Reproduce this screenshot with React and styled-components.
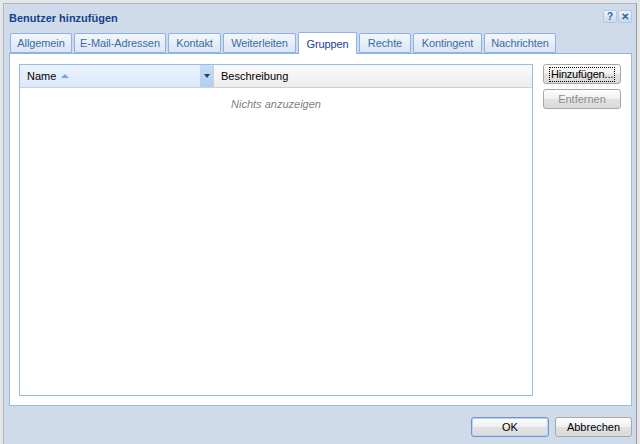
import React from "react";
import styled, { createGlobalStyle } from "styled-components";

const GlobalStyle = createGlobalStyle`
  html, body {
    margin: 0;
    padding: 0;
    background: #e6e6e6;
    overflow: hidden;
  }
  body {
    font-family: "Liberation Sans", Arial, sans-serif;
    font-size: 11px;
  }
`;

const Window = styled.div`
  margin: 3px 3px 0 3px;
  height: 446px;
  box-sizing: border-box;
  background: #cfdbea;
  border: 1px solid #a9b7c8;
  border-right-color: #9a9a9a;
  display: flex;
  flex-direction: column;
  padding: 0 4px 0 5px;
`;

const Header = styled.div`
  display: flex;
  align-items: center;
  justify-content: space-between;
  height: 27px;
`;

const Title = styled.div`
  font-weight: bold;
  font-size: 11px;
  color: #15428b;
  padding-top: 1px;
`;

const Tools = styled.div`
  display: flex;
  gap: 1px;
  margin-top: -2px;
`;

const Tool = styled.div`
  width: 14px;
  height: 13px;
  border-radius: 2px;
  background: linear-gradient(#eef3fa, #c9d8ec);
  border: 1px solid #b5c8e2;
  box-sizing: border-box;
  display: flex;
  align-items: center;
  justify-content: center;
  color: #2d5fa8;
  font-weight: bold;
  font-size: 10px;
  line-height: 1;
`;

const Panel = styled.div`
  display: flex;
  flex-direction: column;
  margin-top: 1px;
  width: 623px;
`;

const TabStrip = styled.div`
  display: flex;
  gap: 2px;
  padding-left: 1px;
  height: 21px;
  border-bottom: 1px solid #8db2e3;
  align-items: flex-end;
`;

const Tab = styled.div`
  width: ${(p) => p.$w}px;
  height: ${(p) => (p.$active ? "22px" : "20px")};
  margin-bottom: ${(p) => (p.$active ? "-1px" : "0")};
  box-sizing: border-box;
  display: flex;
  align-items: center;
  justify-content: center;
  border: 1px solid #8db2e3;
  border-bottom: ${(p) => (p.$active ? "none" : "1px solid #8db2e3")};
  border-radius: 2px 2px 0 0;
  background: ${(p) =>
    p.$active ? "#ffffff" : "linear-gradient(#f3f7fc, #d9e5f4)"};
  color: ${(p) => (p.$active ? "#15428b" : "#416aa3")};
  white-space: nowrap;
  letter-spacing: -0.1px;
`;

const Body = styled.div`
  height: 352px;
  box-sizing: border-box;
  background: #ffffff;
  border: 1px solid #99bbe8;
  border-top: none;
  display: flex;
  padding: 10px 10px 9px 9px;
  gap: 10px;
`;

const Grid = styled.div`
  width: 514px;
  box-sizing: border-box;
  border: 1px solid #99bbe8;
  display: flex;
  flex-direction: column;
`;

const HeaderRow = styled.div`
  display: flex;
  height: 22px;
  border-bottom: 1px solid #d0d0d0;
  background: linear-gradient(#fbfbfb, #ececec);
`;

const ColHeader = styled.div`
  width: ${(p) => p.$w || "auto"};
  flex: ${(p) => (p.$w ? "none" : "1")};
  display: flex;
  align-items: center;
  box-sizing: border-box;
  padding-left: 7px;
  color: #000;
  position: relative;
  background: ${(p) =>
    p.$hover ? "linear-gradient(#ebf3fd, #d9e8fb)" : "transparent"};
  border-right: 1px solid ${(p) => (p.$hover ? "#d0d0d0" : "transparent")};
`;

const SortArrow = styled.span`
  margin-left: 5px;
  width: 0;
  height: 0;
  border-left: 4px solid transparent;
  border-right: 4px solid transparent;
  border-bottom: 4px solid #7ba3d6;
`;

const Trigger = styled.div`
  position: absolute;
  right: 0;
  top: 0;
  bottom: 0;
  width: 13px;
  background: linear-gradient(#c8ddf6, #b1cdf0);
  display: flex;
  align-items: center;
  justify-content: center;
  &::after {
    content: "";
    border-left: 3px solid transparent;
    border-right: 3px solid transparent;
    border-top: 4px solid #2c3e57;
  }
`;

const Empty = styled.div`
  text-align: center;
  color: #808080;
  font-style: italic;
  padding-top: 10px;
`;

const SideButtons = styled.div`
  display: flex;
  flex-direction: column;
  gap: 5px;
`;

const Button = styled.button`
  width: ${(p) => p.$w || 78}px;
  height: 20px;
  box-sizing: border-box;
  font-family: "Liberation Sans", Arial, sans-serif;
  font-size: 11px;
  color: ${(p) => (p.disabled ? "#8d8d8d" : "#000")};
  border: 1px solid ${(p) => (p.$default ? "#6e96c4" : "#a7a7a7")};
  box-shadow: ${(p) => (p.$default ? "inset 0 0 0 1px #bcd3ee" : "none")};
  border-radius: 3px;
  background: linear-gradient(#fdfdfd 0%, #f0f0f0 50%, #e2e2e2 51%, #dadada 100%);
  padding: 0;
  display: flex;
  align-items: center;
  justify-content: center;
`;

const Focus = styled.span`
  outline: 1px dotted #000;
  padding: 0 1px;
  line-height: 13px;
  letter-spacing: -0.2px;
`;

const Footer = styled.div`
  display: flex;
  justify-content: flex-end;
  gap: 6px;
  padding-top: 11px;
  width: 623px;
`;

const tabs = [
  ["Allgemein", 62],
  ["E-Mail-Adressen", 92],
  ["Kontakt", 53],
  ["Weiterleiten", 73],
  ["Gruppen", 59],
  ["Rechte", 52],
  ["Kontingent", 69],
  ["Nachrichten", 72],
];

export default function App() {
  return (
    <>
      <GlobalStyle />
      <Window>
        <Header>
          <Title>Benutzer hinzufügen</Title>
          <Tools>
            <Tool>?</Tool>
            <Tool>✕</Tool>
          </Tools>
        </Header>
        <Panel>
          <TabStrip>
            {tabs.map(([label, w]) => (
              <Tab key={label} $w={w} $active={label === "Gruppen"}>
                {label}
              </Tab>
            ))}
          </TabStrip>
          <Body>
            <Grid>
              <HeaderRow>
                <ColHeader $w="194px" $hover>
                  Name
                  <SortArrow />
                  <Trigger />
                </ColHeader>
                <ColHeader>Beschreibung</ColHeader>
              </HeaderRow>
              <Empty>Nichts anzuzeigen</Empty>
            </Grid>
            <SideButtons>
              <Button>
                <Focus>Hinzufügen...</Focus>
              </Button>
              <Button disabled>Entfernen</Button>
            </SideButtons>
          </Body>
        </Panel>
        <Footer>
          <Button $default>OK</Button>
          <Button $w={77}>Abbrechen</Button>
        </Footer>
      </Window>
    </>
  );
}
